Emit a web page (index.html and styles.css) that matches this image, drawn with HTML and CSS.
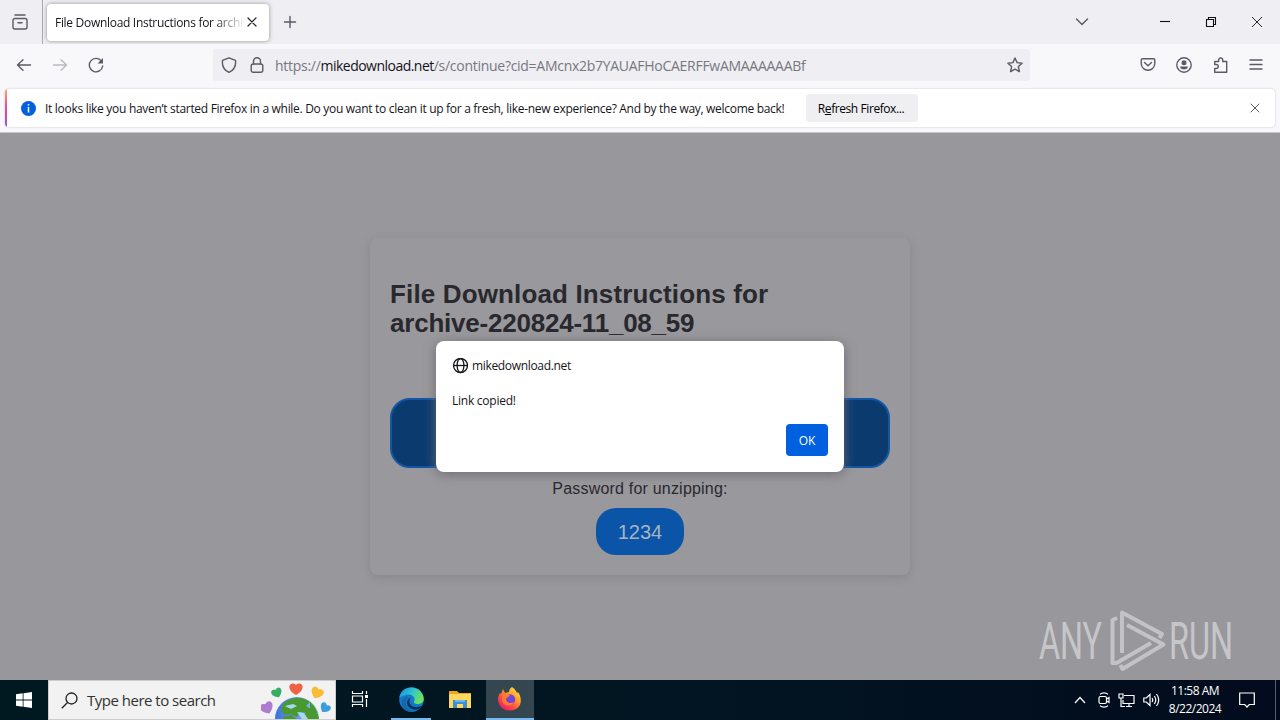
FILE: index.html
```html
<!DOCTYPE html>
<html lang="en">
<head>
<meta charset="utf-8">
<title>File Download Instructions</title>
<link rel="stylesheet" href="styles.css">
</head>
<body>
<div class="desktop">
  <header class="tabbar">
    <div class="view"><svg class="ic" width="20" height="20" viewBox="0 0 20 20"><path d="M5 3h10M3 8.500a2 2 0 0 1 2-2h10a2 2 0 0 1 2 2V15a2 2 0 0 1-2 2H5a2 2 0 0 1-2-2zM8 10.800h4"/></svg></div>
    <div class="tab"><span class="tab-title">File Download Instructions for archiv</span><svg class="ic dark" width="10" height="10" viewBox="0 0 10 10"><path d="M1 1l8 8M9 1l-8 8"/></svg></div>
    <svg class="ic plus" width="14" height="14" viewBox="0 0 14 14"><path d="M7 1.500v11M1.500 7h11"/></svg>
    <div class="window-buttons">
      <svg class="ic" width="14" height="10" viewBox="0 0 14 10"><path d="M1.500 2L7 7.500 12.500 2"/></svg>
      <svg class="ic win" width="12" height="12" viewBox="0 0 12 12"><path d="M1 5.500h10"/></svg>
      <svg class="ic win" width="12" height="12" viewBox="0 0 12 12"><path d="M1.500 3.500h7v7h-7zM3.500 3v-1.500h7v7H9"/></svg>
      <svg class="ic win close" width="12" height="12" viewBox="0 0 12 12"><path d="M1 1l10 10M11 1L1 11"/></svg>
    </div>
  </header>
  <nav class="toolbar">
    <div class="nav-icons">
      <svg class="ic" width="16" height="16" viewBox="0 0 16 16"><path d="M14.500 8h-13M7 2.800L1.500 8 7 13.200"/></svg>
      <svg class="ic faded" width="16" height="16" viewBox="0 0 16 16"><path d="M1.500 8h13M9 2.800L14.500 8 9 13.200"/></svg>
      <svg class="ic" width="16" height="16" viewBox="0 0 16 16"><path d="M13.500 4.200A6.700 6.700 0 1 0 14.700 9"/><path class="solid" d="M15 1v5.500H9.500z"/></svg>
    </div>
    <div class="urlbar">
      <svg class="ic" width="16" height="16" viewBox="0 0 16 16"><path d="M8 .8l6.500 2.600c.6 5-1 9.500-6.500 12C2.500 12.900.9 8.400 1.500 3.400z"/></svg>
      <svg class="ic lock" width="14" height="16" viewBox="0 0 14 16"><rect x="1.200" y="7" width="11.600" height="8.300" rx="2"/><path d="M3.500 7V4.200a3.500 3.500 0 0 1 7 0V7"/></svg>
      <span class="url">https://<b>mikedownload.net</b>/s/continue?cid=AMcnx2b7YAUAFHoCAERFFwAMAAAAAABf</span>
      <svg class="ic star" width="16" height="16" viewBox="0 0 16 16"><path d="M8 1l2.100 4.600 5 .6-3.700 3.400 1 5L8 12.100l-4.400 2.500 1-5L.9 6.200l5-.6z"/></svg>
    </div>
    <div class="tools">
      <svg class="ic" width="16" height="16" viewBox="0 0 16 16"><path d="M2.500 1.800h11a1.300 1.300 0 0 1 1.300 1.300V6.500a6.800 6.800 0 0 1-13.600 0V3.100A1.300 1.300 0 0 1 2.500 1.800zM4.500 5.500L8 8.800l3.500-3.300"/></svg>
      <svg class="ic" width="16" height="16" viewBox="0 0 16 16"><circle cx="8" cy="8" r="7.200"/><circle class="solid" cx="8" cy="5.800" r="2.500"/><path class="solid" d="M4 9.500h8c0 4-8 4-8 0z"/></svg>
      <svg class="ic puzzle" width="16" height="16" viewBox="0 0 16 16"><path d="M1.700 4.500h4V3a2 2 0 0 1 4 0v1.500h4V15.200h-12v-3.700h1.500a2 2 0 0 0 0-4H1.700z"/></svg>
      <svg class="ic" width="16" height="16" viewBox="0 0 16 16"><path d="M2 3h12M2 7.500h12M2 12h12"/></svg>
    </div>
  </nav>
  <section class="notice-wrap">
    <div class="notice">
      <svg width="15" height="15" viewBox="0 0 15 15"><circle cx="7.500" cy="7.500" r="7.500" fill="#0060df"/><path d="M7.500 3v1.500M7.500 6v5.500" stroke="#fff" stroke-width="1.500"/></svg>
      <span class="notice-text">It looks like you haven’t started Firefox in a while. Do you want to clean it up for a fresh, like-new experience? And by the way, welcome back!</span>
      <button class="refresh">R<u>e</u>fresh Firefox...</button>
      <svg class="ic dismiss" width="10" height="10" viewBox="0 0 10 10"><path d="M1 1l8 8M9 1l-8 8"/></svg>
    </div>
  </section>
  <main class="page">
    <article class="card">
      <h1><span class="line-one">File Download Instructions for</span><br>archive-220824-11_08_59</h1>
      <div class="link"></div>
      <p>Password for unzipping:</p>
      <div class="password">1234</div>
    </article>
    <div class="dialog">
      <div class="origin"><svg width="16" height="16" viewBox="0 0 16 16" fill="none" stroke="#15141a" stroke-width="1.300"><circle cx="8.500" cy="7.500" r="7"/><ellipse cx="8.500" cy="7.500" rx="3.400" ry="7"/><path d="M1.500 7.500h14"/></svg><span>mikedownload.net</span></div>
      <div class="message">Link copied!</div>
      <button class="ok">OK</button>
    </div>
    <svg class="watermark" width="204" height="64" viewBox="0 0 204 64">
      <g fill="#c6c6c9">
        <text x="2" y="50" textLength="63" lengthAdjust="spacingAndGlyphs">ANY</text>
        <text x="132" y="50" textLength="64" lengthAdjust="spacingAndGlyphs">RUN</text>
      </g>
      <g class="mark">
        <path d="M80 9l-4.500 2v43h4L114 34"/>
        <path d="M85 44V3.500L125 25l-2.500 4"/>
        <path d="M90 16l36.500 19.500L85.500 60l-2-4"/>
      </g>
    </svg>
  </main>
  <footer class="taskbar">
    <div class="start"><svg width="16" height="16" viewBox="0 0 16 16" fill="#fff"><path d="M0 2.200l6.700-.9v6.300H0zM7.500 1.200L16 0v7.600H7.500zM0 8.400h6.700v6.300L0 13.800zM7.500 8.400H16V16l-8.500-1.200z"/></svg></div>
    <div class="search">
      <svg width="17" height="17" viewBox="0 0 17 17" fill="none" stroke="#222" stroke-width="1.300"><circle cx="10.500" cy="6.500" r="5.500"/><path d="M6.500 10.500L.8 16.200"/></svg>
      <span>Type here to search</span>
      <svg class="earth" width="74" height="38" viewBox="0 0 74 38">
        <defs><linearGradient id="sea"><stop stop-color="#3f70df"/><stop offset="1" stop-color="#82c6f6"/></linearGradient><path id="heart" d="M0 6C-12-1-5-9 0-4 5-9 12-1 0 6z"/></defs>
        <circle cx="36" cy="38" r="22" fill="url(#sea)"/>
        <path d="M22 23c8-8 19-8 27-2l-4 4 5 3-4 4-7-1-3 5-7-3-6 1-3-5zM49 21c5 4 8 10 9 17H44l-1-5 6-4zM22 36l8-2 6 4H22z" fill="#4a9830"/>
        <path d="M24 25l8-2 4 2-6 3zM36 31l7 1 4 6h-6z" fill="#a6daf2"/>
        <use href="#heart" transform="translate(35 8)" fill="#ef6245"/>
        <use href="#heart" transform="translate(16 12) rotate(-25) scale(.8)" fill="#35ad63"/>
        <use href="#heart" transform="translate(56 12) rotate(25) scale(.95)" fill="#f9bd35"/>
        <use href="#heart" transform="translate(6 27) rotate(-25) scale(1)" fill="#ad7bd0"/>
        <use href="#heart" transform="translate(64 27) rotate(35) scale(.8)" fill="#3b9ddd"/>
      </svg>
    </div>
    <div class="task view-task"><svg width="18" height="16" viewBox="0 0 18 16" fill="none" stroke="#fff" stroke-width="1.200"><path d="M1.500 0v2.500h10V0M1.500 5h10v6h-10zM1.500 16v-2.500h10V16M15.500 0v3M15.500 8v8"/><path d="M15.500 4v3" stroke-width="3"/></svg></div>
    <div class="task open"><svg width="25" height="25" viewBox="0 0 25 25">
      <defs><linearGradient id="e1" x1="0" y1="0" x2="1" y2=".4"><stop stop-color="#168ee0"/><stop offset=".55" stop-color="#2ec5cf"/><stop offset="1" stop-color="#6be35b"/></linearGradient></defs>
      <circle cx="12.500" cy="12.500" r="12.300" fill="#1579c8"/>
      <path d="M.4 11C2-3 23-3 24.700 11.500c.3 4-3 5.500-6.500 5.500-3 0-4-1.500-3-3 2-5-5-8-10-5.500C2.500 9.300 1 10 .4 11z" fill="url(#e1)"/>
      <path d="M9.500 9.500c-5 5-2 13 5 14.900-3 1-8-.4-10.500-3.400C1 16 3 10 9.500 9.500z" fill="#1466ae"/>
      <path d="M12 10.500c-4 4 0 10 5 9.500 3 0 5.500-1.500 6-1-4 6-11 4-14 0-2-3-1-7 3-8.500z" fill="#07335b"/>
    </svg></div>
    <div class="task open files"><svg width="22" height="19" viewBox="0 0 22 19"><path d="M0 1h8l2 2h12v15H0z" fill="#e9a91d"/><path d="M0 4h22v14H0z" fill="#ffd75f"/><path d="M4 18v-8h14v8h-4v-4H8v4z" fill="#3b8ed0"/><path d="M6 10h10v2H6z" fill="#67b8ee"/></svg></div>
    <div class="task open active"><svg width="24" height="24" viewBox="0 0 24 24">
      <defs><linearGradient id="f1" x1="1" y1="0" x2=".2" y2="1"><stop stop-color="#fff34a"/><stop offset=".4" stop-color="#ffa22a"/><stop offset=".7" stop-color="#ff4a42"/><stop offset="1" stop-color="#e91674"/></linearGradient></defs>
      <path d="M14 0c3 2 4 4 5 6l1-1c5 7 4 18-8 18.500C2 24-3 13 2 6l1 1 2-5 2 4 4-1c0-2 1-4 3-5z" fill="url(#f1)"/>
      <circle cx="12" cy="12.500" r="5.200" fill="#7542db"/><path d="M4 8c4-2 5 0 8 0-1 3-4 2-4 4 0 4 5 5 8 3-2 5-11 5-12-2z" fill="#ff7b2a"/>
    </svg></div>
    <div class="tray">
      <svg class="chev" width="12" height="8" viewBox="0 0 12 8"><path d="M1 7l5-5.500L11 7"/></svg>
      <svg width="12" height="16" viewBox="0 0 12 16"><rect x="1" y="4.500" width="7.500" height="7" rx="1.500"/><path d="M8.500 7l2.500-1.500v5L8.500 9M2 2.300c2-2 6-2 8 0M2 13.700c2 2 6 2 8 0"/></svg>
      <svg width="17" height="15" viewBox="0 0 17 15"><path d="M6 2.500h10v8H5V7M8 13.500h6M11 11v2.500M1 1h4v4H1zM3 5v8.500h4"/></svg>
      <svg class="volume" width="17" height="14" viewBox="0 0 17 14"><path d="M.8 5h2.500L7 1.500v11L3.300 9H.8zM9 5q1.500 2 0 4M11.300 3q3 4 0 8M13.500 1q4.500 6 0 12"/></svg>
      <div class="clock"><span>11:58 AM</span><span>8/22/2024</span></div>
      <svg class="action" width="16" height="16" viewBox="0 0 16 16"><path d="M.7 1h14.600v11.500h-5L8 15l-2.300-2.500h-5z"/></svg>
      <i class="show-desktop"></i>
    </div>
  </footer>
</div>
</body>
</html>
```

FILE: styles.css
```css
* { box-sizing: border-box; }
body { margin: 0; font-family: "Open Sans", "Noto Sans", sans-serif; color: #15141a; }
svg { display: block; flex: none; }
button { border: 0; font: inherit; padding: 0; }
.desktop { width: 1280px; height: 720px; overflow: hidden; display: flex; flex-direction: column; }
.ic { fill: none; stroke: #5b5b66; stroke-width: 1.4; stroke-linecap: round; stroke-linejoin: round; }
.ic .solid { fill: #5b5b66; stroke: none; }
.dark { stroke: #222; stroke-width: 1.2; }
.faded { opacity: .4; }
.tabbar { height: 44px; background: #efeef3; display: flex; align-items: center; }
.view { width: 43px; height: 44px; border-right: 1px solid #a9a9b2; padding: 12px 0 0 10px; }
.tab { width: 222px; height: 37px; margin-left: 4px; padding: 0 12px 0 8px; background: #fff; border-radius: 4px; box-shadow: 0 0 4px #8f8f97; display: flex; align-items: center; justify-content: space-between; }
.tab-title { width: 190px; white-space: nowrap; font-size: 12px; letter-spacing: -.3px; mask-image: linear-gradient(90deg, #000 158px, transparent 190px); }
.plus { margin-left: 14px; }
.window-buttons { margin-left: auto; padding-right: 17px; display: flex; align-items: center; gap: 34px; }
.window-buttons svg:first-child { margin-right: 36px; }
.win { stroke: #111; stroke-width: 1.1; stroke-linecap: butt; stroke-linejoin: miter; }
.win.close { stroke-width: .9; }
.toolbar { height: 42px; background: #f8f8fb; display: flex; align-items: center; }
.nav-icons { width: 213px; display: flex; gap: 20px; padding-left: 16px; }
.urlbar { width: 817px; height: 32px; padding: 0 7px 0 8px; background: #efeef3; border-radius: 3px; display: flex; align-items: center; }
.lock { margin-left: 13px; }
.url { margin-left: 11px; font-size: 14px; color: #77777f; white-space: nowrap; letter-spacing: -.28px; }
.url b { font-weight: 400; color: #15141a; letter-spacing: -.52px; }
.star { margin-left: auto; }
.tools { margin-left: auto; padding-right: 16px; display: flex; gap: 20px; }
.puzzle { margin-left: 1px; margin-right: -1px; }
.notice-wrap { height: 47px; padding: 3px 5px 5px; background: #f8f8fa; border-bottom: 1px solid #c6c6cc; }
.notice { height: 38px; padding: 0 15px 0 16px; background: linear-gradient(#ffa36c, #e94c91 45%, #9059c7) left / 2px 100% no-repeat, #fff; border-radius: 4px; box-shadow: 0 0 2px #bdbdc6; display: flex; align-items: center; }
.notice-text { width: 761px; padding: 1px 0 0 9px; flex: none; white-space: nowrap; font-size: 12px; letter-spacing: -.3px; }
.refresh { margin-left: 9px; width: 112px; height: 28px; padding: 1px 2px 0 0; background: #efeef1; border-radius: 4px; font-size: 12px; letter-spacing: -.42px; flex: none; }
.dismiss { margin-left: auto; stroke-width: 1; }
.page { height: 547px; position: relative; background: #98979c; display: flex; justify-content: center; padding-top: 105px; }
.card { width: 540px; height: 337px; padding: 42px 20px 0; border-radius: 8px; background: #99989c; box-shadow: 0 2px 10px #88878c; display: flex; flex-direction: column; align-items: center; }
h1 { width: 500px; margin: 0; font: bold 26px/29px "Liberation Sans", Arial, sans-serif; color: #29282e; white-space: nowrap; letter-spacing: -.22px; }
.line-one { letter-spacing: .14px; }
.link { width: 500px; height: 70px; margin-top: 60px; border: 2px solid #1256a4; border-radius: 20px; background: #0b3a6f; flex: none; }
.card p { margin: 10px 0 9px; font: 16px/21px "Liberation Sans", Arial, sans-serif; letter-spacing: .2px; color: #29282e; white-space: nowrap; }
.password { width: 88px; height: 47px; border-radius: 20px; background: #0a55a8; color: #a8b3c2; font: 20px/48px "Liberation Sans", Arial, sans-serif; text-align: center; }
.dialog { position: absolute; left: 436px; top: 208px; width: 408px; height: 131px; padding: 16px; background: #fff; border-radius: 8px; box-shadow: 0 2px 12px #6b6b72; display: flex; flex-direction: column; font-size: 12px; line-height: 18px; letter-spacing: -.25px; }
.origin { display: flex; align-items: center; gap: 4px; letter-spacing: -.33px; }
.message { margin-top: 17px; }
.ok { align-self: flex-end; margin-top: 14px; width: 42px; height: 32px; padding-top: 1px; flex: none; background: #0060df; color: #fff; border-radius: 4px; font-size: 12px; }
.watermark { position: absolute; left: 1037px; top: 476px; font: 400 51px Roboto, sans-serif; }
.mark { fill: none; stroke: #c3c3c6; stroke-width: 4; stroke-linejoin: round; }
.taskbar { height: 40px; background: linear-gradient(90deg, #001820, #021522 55%, #020b1d); display: flex; color: #fff; }
.start { width: 48px; display: grid; place-items: center; }
.search { width: 288px; padding-left: 12px; background: #f2f2f2; border: 1px solid #ccc; color: #333; display: flex; align-items: center; gap: 9px; font-size: 15px; }
.search span { white-space: nowrap; letter-spacing: -.5px; }
.earth { margin-left: auto; }
.task { width: 48px; height: 40px; display: grid; place-items: center; border-bottom: 2px solid transparent; margin-right: 3px; }
.view-task { margin-right: 2px; }
.open { width: 40px; margin-left: 5px; margin-right: 5px; border-color: #76b9ed; }
.files { margin-left: 4px; margin-right: 4px; border-color: transparent; }
.active { width: 48px; margin-left: 2px; background: #34464f; }
.tray { margin-left: auto; padding-right: 4px; display: flex; align-items: center; }
.tray svg { fill: none; stroke: #fff; stroke-width: 1.2; margin-right: 8px; }
.tray .chev { margin-right: 12px; }
.tray .volume { margin-right: 5px; }
.clock { width: 60px; display: flex; flex-direction: column; align-items: center; font-size: 12px; line-height: 18px; white-space: nowrap; letter-spacing: -.5px; }
.tray .action { margin: 0 20px 0 14px; }
.show-desktop { width: 1px; height: 40px; background: #536070; }
```
